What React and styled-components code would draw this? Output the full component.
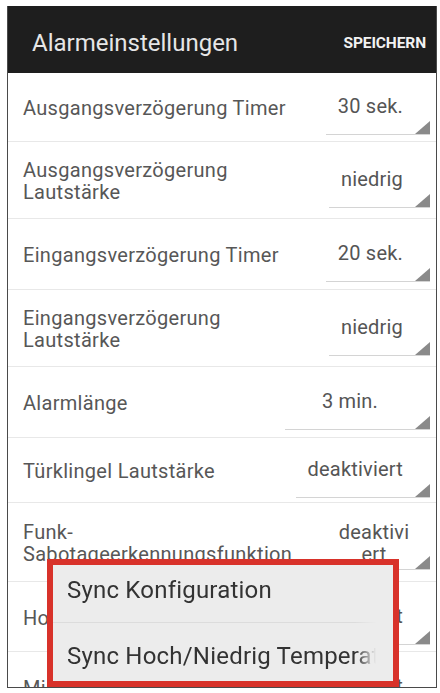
import React from 'react';
import styled, { createGlobalStyle } from 'styled-components';

const GlobalStyle = createGlobalStyle`
  html, body {
    margin: 0;
    padding: 0;
    background: #ffffff;
  }
  body {
    font-family: Roboto, "Noto Sans", "Liberation Sans", sans-serif;
  }
`;

// label lines are split the way the list wraps them on the device
const settings = [
  { label: 'Ausgangsverzögerung Timer', value: '30 sek.', height: 69 },
  { label: 'Ausgangsverzögerung\nLautstärke', value: 'niedrig', height: 77 },
  { label: 'Eingangsverzögerung Timer', value: '20 sek.', height: 71 },
  { label: 'Eingangsverzögerung\nLautstärke', value: 'niedrig', height: 77 },
  { label: 'Alarmlänge', value: '3 min.', height: 71, minWidth: 145 },
  { label: 'Türklingel Lautstärke', value: 'deaktiviert', height: 65 },
  { label: 'Funk-\nSabotageerkennungsfunktion', value: 'deaktiviert', height: 79, narrow: true },
  { label: 'Hoch/Niedrig Temperatur', value: 'deaktiviert', height: 70 },
  { label: 'Mindesttemperatur', value: 'deaktiviert', height: 70 },
];

const menuItems = ['Sync Konfiguration', 'Sync Hoch/Niedrig Temperatur'];

export default function App() {
  return (
    <>
      <GlobalStyle />
      <Phone>
        <ActionBar>
          <Title>Alarmeinstellungen</Title>
          <SaveButton>SPEICHERN</SaveButton>
        </ActionBar>
        <List>
          {settings.map((s) => (
            <Row key={s.label} $height={s.height}>
              <Label>{s.label}</Label>
              <Spinner $minWidth={s.minWidth} $narrow={s.narrow}>
                {s.value}
              </Spinner>
            </Row>
          ))}
        </List>
        <PopupMenu>
          {menuItems.map((item) => (
            <MenuItem key={item}>{item}</MenuItem>
          ))}
        </PopupMenu>
      </Phone>
    </>
  );
}

const Phone = styled.div`
  position: relative;
  box-sizing: border-box;
  margin: 6px 0 0 7px;
  width: 430px;
  height: 682px;
  border: 1.5px solid #4a4a4a;
  border-top: none;
  overflow: hidden;
  display: flex;
  flex-direction: column;
  background: #ffffff;
`;

const ActionBar = styled.header`
  flex: none;
  height: 67px;
  box-sizing: border-box;
  padding: 6px 10px 0 24px;
  background: #1e1e1e;
  display: flex;
  align-items: center;
  justify-content: space-between;
`;

const Title = styled.h1`
  margin: 0;
  font-size: 24px;
  font-weight: 400;
  color: #e6e6e6;
`;

const SaveButton = styled.span`
  font-size: 15.5px;
  font-weight: 700;
  letter-spacing: -0.1px;
  color: #f2f2f2;
`;

const List = styled.div`
  display: flex;
  flex-direction: column;
`;

const Row = styled.div`
  flex: none;
  box-sizing: border-box;
  height: ${(p) => p.$height}px;
  padding: 0 6px 0 15px;
  display: flex;
  align-items: center;
  gap: 10px;
  border-bottom: 1px solid #e8e8e8;
`;

const Label = styled.div`
  flex: 1;
  min-width: 0;
  white-space: pre-line;
  font-size: 20px;
  line-height: 22px;
  letter-spacing: 0.3px;
  color: #575757;
  padding-top: 2px;
`;

const Spinner = styled.div`
  position: relative;
  flex: none;
  box-sizing: border-box;
  min-width: ${(p) => (p.$minWidth ? `${p.$minWidth}px` : 'auto')};
  width: ${(p) => (p.$narrow ? '102px' : 'auto')};
  padding: ${(p) => (p.$narrow ? '7px 20px 4px 10px' : '16px 27px 17px 12px')};
  font-size: 20px;
  line-height: 22px;
  letter-spacing: 0.2px;
  color: #555555;
  text-align: center;
  word-break: ${(p) => (p.$narrow ? 'break-all' : 'normal')};
  border-bottom: 1px solid #d4d4d4;

  &::after {
    content: '';
    position: absolute;
    right: 0;
    bottom: 0;
    width: 0;
    height: 0;
    border-left: 15px solid transparent;
    border-bottom: 13px solid #8a8a8a;
  }
`;

const PopupMenu = styled.div`
  position: absolute;
  left: 39px;
  top: 553px;
  width: 352px;
  height: 128px;
  box-sizing: border-box;
  border: 6px solid #d8322a;
  background: #ececec;
  display: flex;
  flex-direction: column;
`;

const MenuItem = styled.div`
  flex: 1;
  display: flex;
  align-items: center;
  padding: 0 12px 6px 14px;
  font-size: 24px;
  letter-spacing: 0.2px;
  color: #333333;
  white-space: nowrap;
  overflow: hidden;
  -webkit-mask-image: linear-gradient(to right, #000 89%, transparent 95%);
  mask-image: linear-gradient(to right, #000 89%, transparent 95%);

  & + & {
    padding: 8px 12px 0 14px;
    border-top: 1px solid #dcdcdc;
  }
`;
